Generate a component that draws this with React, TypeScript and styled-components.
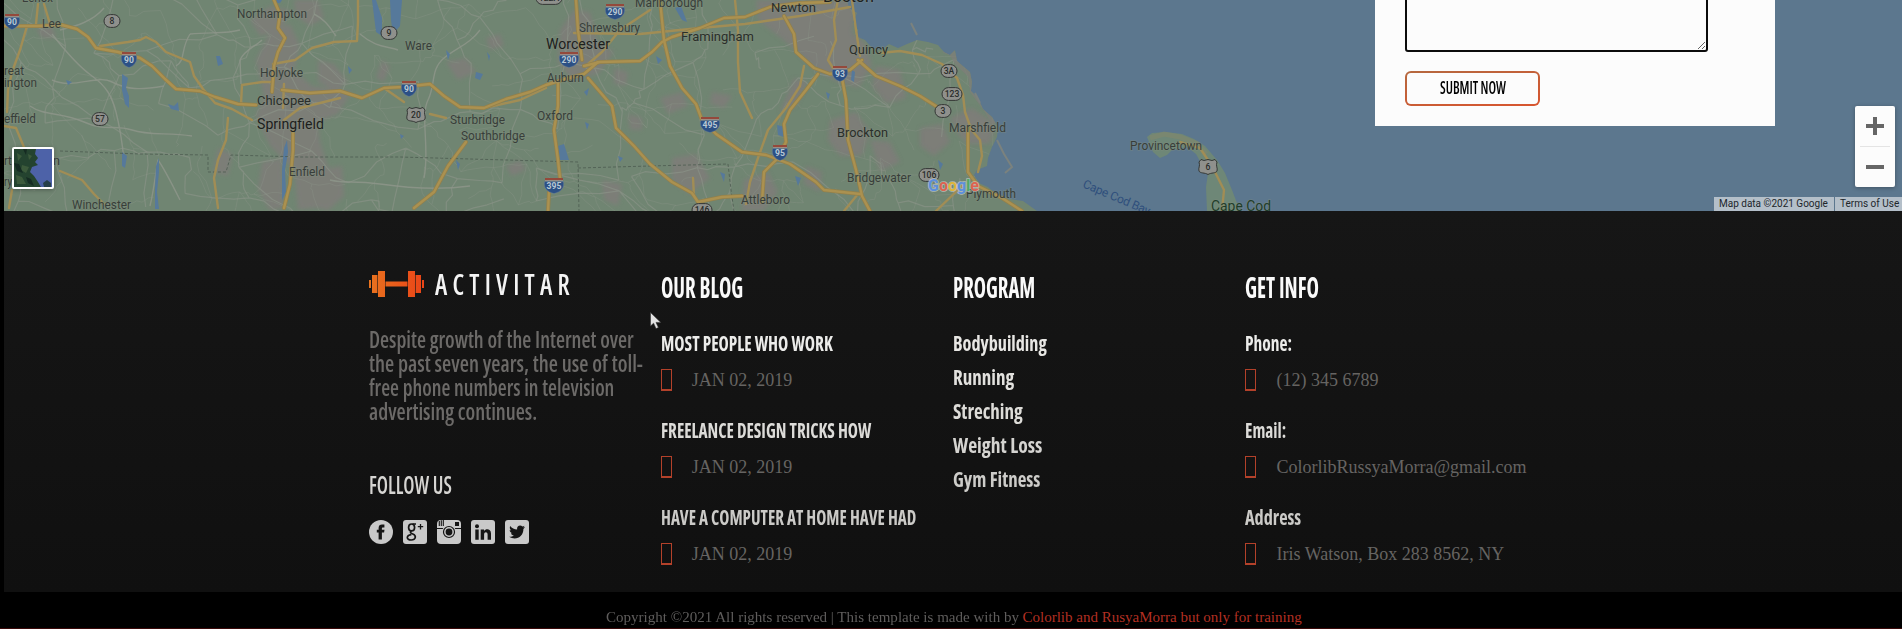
import React, { useLayoutEffect, useRef, useState } from "react";
import styled, { createGlobalStyle } from "styled-components";

const GlobalStyle = createGlobalStyle`
  * { box-sizing: border-box; }
  html, body { margin: 0; background: #000; overflow: hidden; }
  body { font-family: "Liberation Serif", serif; }
`;

/* ---------- text squeezed to the width of a condensed face ---------- */

const FitBox = styled.span`
  display: block;
  white-space: nowrap;
  & > span {
    display: inline-block;
    transform-origin: 0 50%;
  }
`;

function Fit({ width, children }: { width: number; children: string }) {
  const ref = useRef<HTMLSpanElement>(null);
  const [scale, setScale] = useState(1);
  useLayoutEffect(() => {
    if (ref.current) setScale(width / ref.current.offsetWidth);
  }, [width, children]);
  return (
    <FitBox style={{ width }}>
      <span ref={ref} style={{ transform: `scaleX(${scale})` }}>{children}</span>
    </FitBox>
  );
}

/* ---------- page ---------- */

const Page = styled.div`
  position: relative;
  width: 1902px;
  height: 629px;
  padding-left: 4px;
  background: #000;
  overflow: hidden;
`;

const MapSection = styled.section`
  position: relative;
  height: 211px;
  overflow: hidden;
  background: #5c778e;
`;

const MapArt = styled.svg`
  display: block;
  width: 1898px;
  height: 211px;
  font-family: Roboto, sans-serif;
`;

const ContactCard = styled.div`
  position: absolute;
  left: 1371px;
  top: 0;
  width: 400px;
  height: 126px;
  padding: 0 0 0 30px;
  background: #fcfcfc;
`;

const MessageBox = styled.textarea`
  display: block;
  width: 303px;
  height: 60px;
  margin: -8px 0 19px;
  border: 2px solid #0c0c0c;
  border-radius: 3px;
  background: #fcfcfc;
  resize: both;
  outline: none;
`;

const SubmitButton = styled.button`
  display: flex;
  align-items: center;
  justify-content: center;
  width: 135px;
  height: 35px;
  padding: 0 0 3px;
  border: 2px solid transparent;
  border-radius: 6px;
  background:
    linear-gradient(#fcfcfc, #fcfcfc) padding-box,
    linear-gradient(170deg, #b5683f, #d8552f) border-box;
  color: #000;
  font: 600 17px "Open Sans", sans-serif;
  font-stretch: 75%;
`;

const ZoomControl = styled.div`
  position: absolute;
  left: 1851px;
  top: 106px;
  width: 40px;
  height: 81px;
  display: flex;
  flex-direction: column;
  align-items: center;
  background: #fcfcfc;
  border-radius: 2px;
  box-shadow: 0 1px 4px rgba(0, 0, 0, 0.3);
`;

const ZoomButton = styled.button`
  flex: 1;
  width: 30px;
  padding: 0;
  border: 0;
  background: none;
  display: grid;
  place-items: center;
  & + & { border-top: 1px solid #e4e4e4; }
`;

const Thumb = styled.div`
  position: absolute;
  left: 8px;
  top: 147px;
  width: 42px;
  height: 42px;
  border: 2px solid #fff;
  border-radius: 2px;
  overflow: hidden;
  box-shadow: 0 1px 4px rgba(0, 0, 0, 0.3);
  svg { display: block; }
`;

const Attribution = styled.div`
  position: absolute;
  right: 0;
  bottom: 0;
  height: 14px;
  display: flex;
  gap: 1px;
  color: #20262b;
  font: 10px/14px Roboto, sans-serif;
`;

const AttributionCell = styled.div<{ $width: number }>`
  width: ${(p) => p.$width}px;
  padding-left: 5px;
  background: #b4bfc9;
`;

const Footer = styled.footer`
  height: 381px;
  padding: 56px 0 0 364.5px;
  display: grid;
  grid-template-columns: repeat(4, 292.33px);
  align-items: start;
  background: linear-gradient(#161616, #101010);
`;

const Logo = styled.div`
  display: flex;
  align-items: center;
  gap: 11px;
  height: 34px;
  color: #f4f4f4;
  font: 600 29px/34px "Open Sans", sans-serif;
  font-stretch: 75%;
  letter-spacing: 6px;
`;

const About = styled.div`
  margin-top: 26px;
  color: #6c6a68;
  font: 600 23.5px/24.1px "Open Sans", sans-serif;
  font-stretch: 75%;
`;

const Heading = styled.h3`
  margin: 2px 0 21px;
  color: #fafafa;
  font: 700 28.5px/36px "Open Sans", sans-serif;
  font-stretch: 75%;
`;

const FollowTitle = styled.h4`
  margin: 44px 0 17px;
  color: #d6d5d2;
  font: 600 24.5px/36px "Open Sans", sans-serif;
  font-stretch: 75%;
`;

const Socials = styled.div`
  display: flex;
  gap: 10px;
  svg { display: block; }
`;

const ItemTitle = styled.div<{ $tone: string }>`
  color: ${(p) => p.$tone};
  font: 700 21.5px/34px "Open Sans", sans-serif;
  font-stretch: 75%;
`;

const Meta = styled.div`
  display: flex;
  gap: 20px;
  margin: 9px 0 22px;
  color: #666462;
  font: 18px/23px "Liberation Serif", serif;
  height: 22px;
`;

const Glyph = styled.i`
  width: 11px;
  height: 22px;
  border: 1px solid #b3412a;
  border-bottom-width: 2px;
`;

const Copyright = styled.div`
  height: 36px;
  padding: 8px 0 0 601.5px;
  display: flex;
  gap: 4px;
  color: #5f5d5c;
  font: 15px/34px "Liberation Serif", serif;
`;

const CreditLink = styled.a`
  color: #b32f22;
`;

const BottomLine = styled.div`
  height: 1px;
  margin-left: -4px;
  background: #3a0909;
`;

const Pointer = styled.svg`
  position: absolute;
  left: 650px;
  top: 312px;
`;

/* ---------- map data ---------- */

const COAST =
  "M847 0 L849 8 L857 13 L853 22 L858 30 L855 36 L865 40 L872 48 L881 50 L889 44 L898 48 L907 44 L917 40 L928 42 L938 45 L944 52 L950 55 L955 50 L957 61 L964 67 L970 72 L972 82 L971 91 L978 98 L983 109 L992 117 L998 127 L997 137 L992 147 L988 158 L987 166 L977 170 L974 175 L979 183 L988 187 L997 195 L1010 199 L1023 201 L1030 206 L1037 211";

const CAPE =
  "M1147 137 L1152 133 L1166 132 L1182 134 L1194 139 L1205 146 L1217 160 L1225 173 L1232 190 L1240 211 L1207 211 L1206 187 L1208 173 L1201 163 L1196 154 L1187 147 L1172 150 L1167 155 L1160 158 L1153 152 Z";

const HIGHWAYS = [
  "M4 26 L22 26 L38 26 L62 25 L77 29 L88 37 L96 48 L118 52 L140 58 L152 66 L165 79 L176 89 L200 91 L215 97 L238 104 L256 105",
  "M278 28 L285 38 L278 52 L274 66 L272 92 M274 0 L280 14 L278 28",
  "M293 132 L293 150 L290 184 L284 208",
  "M282 90 L310 93 L340 91 L362 98 L384 88 L402 87 L430 84 L444 96 L460 107 L484 108 L506 99 L530 92 L546 85 L562 80 L584 74 L598 62",
  "M576 0 L578 30 L582 60",
  "M588 78 L612 106 L616 128 L634 146 L650 164 L672 182 L692 193 L698 202 L722 197 L742 196",
  "M584 66 L600 62 L640 61 L652 52 L662 42 L672 37 L700 28 L724 18 L745 17 L770 7 L800 3 L830 2",
  "M660 0 L664 40 L670 66 L682 88 L696 104 L702 120 L716 134 L742 152 L766 155 L790 164 L816 182 L824 190 L860 194",
  "M784 16 L794 34 L796 52 L814 68 L830 74 L850 70 L862 60",
  "M818 74 L806 90 L790 110 L784 124 L786 142 L776 160 L764 172 L762 202",
  "M842 78 L846 100 L848 140 L856 170 L862 196 L870 211",
  "M858 60 L876 76 L900 86 L920 96 L942 110 M968 128 L968 150 L968 172 L978 186 L1002 198 L1022 211",
  "M558 82 L558 106 L554 130 L558 160 L560 178",
  "M549 192 L548 211",
  "M466 142 L448 166 L434 192 L414 208",
];

const MAIN_ROADS = [
  "M100 46 L128 42 L140 40 L146 37 L156 42 L166 52 L190 62 L194 76 L203 89 L215 103 L232 109 L252 120",
  "M273 64 L295 60 L312 48 L334 42 L357 41 L358 22 L358 0",
  "M241 104 L242 85 L262 82 L272 82 M284 84 L283 108",
  "M228 118 L226 140 L218 160 L214 178 L218 208",
  "M588 64 L602 52 L620 30 L650 10",
  "M574 33 L640 34 L700 28 L745 24 L800 16 L850 7",
  "M735 0 L738 30 L738 62 L740 92 L752 118",
  "M838 76 L828 60 L836 40 L834 20 L838 0",
  "M804 66 L800 86 L786 108 L768 130 L758 158 L750 182 L746 204",
  "M852 0 L856 30 L860 56",
  "M880 53 L900 51 L922 55 L942 64 L957 78 L963 95 L965 112 L970 126",
  "M4 126 L16 128 L26 152 M60 171 L82 180 L94 194 L104 204",
  "M27 26 L20 50 L12 72 L8 90 L7 112 M12 190 L9 208",
  "M38 4 L36 24 M44 4 L50 24",
  "M1180 142 L1200 148 L1212 166 L1224 190 L1222 211",
  "M858 194 L844 211 M962 186 L936 211 M978 172 L982 156 L980 140 L970 128",
  "M384 88 L404 102 M430 114 L446 118 M484 108 L520 100 L546 88 M284 120 L300 108 L340 98",
  "M693 178 L694 196",
];

const URBAN = [
  "M256 60 l14 -28 l20 -8 l10 22 l-6 24 l18 16 l40 6 l-14 22 l-20 8 l2 20 l10 30 l-14 36 l-18 2 l-4 -40 l-24 -24 l-14 -30 l8 -20 z",
  "M250 20 l20 -14 l20 4 l-8 20 l-22 6 z M318 60 l16 4 l14 18 l-12 10 l-18 -10 z M294 0 l24 0 l6 18 l-14 8 l-14 -10 z",
  "M262 162 l20 -4 l2 50 l-14 3 l-12 -22 z M318 170 l24 -4 l2 30 l-16 15 l-18 -5 z",
  "M560 30 l14 -20 l16 2 l8 30 l16 10 l-16 22 l-26 6 l-14 -18 z",
  "M756 0 l92 0 l8 12 l-4 20 l14 12 l6 22 l-14 22 l-20 -6 l-20 -10 l-30 -28 l-30 -24 z",
  "M830 120 l26 -8 l14 20 l-8 24 l-22 0 l-12 -16 z M876 66 l24 4 l6 28 l-20 6 l-14 -18 z M794 78 l14 4 l-12 24 l-16 6 z",
  "M660 98 l22 -6 l6 14 l-20 8 z M672 158 l24 -4 l14 24 l-20 16 l-18 -14 z M712 92 l20 4 l-8 12 l-14 -4 z",
  "M744 180 l24 -8 l10 20 l-14 19 l-22 0 z M806 166 l16 6 l-2 20 l-16 -8 z M870 140 l20 2 l10 20 l-20 10 z",
  "M920 128 l22 -4 l8 18 l-16 14 l-14 -10 z M950 118 l22 -10 l24 16 l-6 20 l-22 0 l-10 -10 z",
  "M614 68 l14 4 l-2 14 l-12 -2 z M628 114 l14 4 l0 12 l-12 0 z M602 180 l20 4 l-4 22 l-14 -6 z",
  "M446 62 l20 -4 l10 14 l-18 8 z M486 38 l14 -4 l4 12 l-14 4 z M36 28 l16 -2 l4 12 l-14 0 z",
  "M506 166 l14 -6 l6 10 l-14 6 z M382 60 l8 6 l-6 16 l-8 -4 z M218 148 l14 6 l-4 22 l-14 -4 z",
];

const LAKES = [
  "M372 0 l4 0 l6 18 l0 18 l-6 -4 z M390 0 l12 0 l-2 26 l-7 8 l-2 -14 z",
  "M122 74 l6 4 l-2 10 l3 8 l0 12 l-4 -4 l-3 -14 z M168 104 l6 2 l4 -4 l1 9 l-8 -2 z",
  "M122 152 l5 4 l-2 12 l-3 -2 z M156 166 l3 -8 l0 14 l-2 20 l2 17 l-4 0 l0 -20 z",
  "M216 56 l4 0 l3 8 l-5 2 z M284 148 l3 -8 l1 12 l-3 18 l1 22 l-4 8 l0 -30 z",
  "M558 146 l6 -2 l5 16 l-9 0 z M777 125 l8 2 l-1 10 l-6 -2 z M675 8 l6 -2 l6 16 l-5 -2 z",
  "M476 72 l7 2 l-3 6 l-5 -2 z M487 52 l3 4 l-1 5 z M584 92 l5 -4 l-2 8 z M456 160 l4 4 l-2 6 z",
  "M446 50 l4 4 l-2 6 z M826 92 l4 2 l-2 6 z M852 70 l3 2 l-1 10 l-3 -2 z M938 160 l5 4 l-3 6 z",
  "M795 176 l6 2 l-3 8 z M720 172 l5 2 l-1 8 z M585 122 l4 2 l-2 6 z M618 156 l5 2 l-3 4 z M656 56 l6 4 l-4 4 z",
  "M66 80 l6 2 l-4 3 z M348 66 l4 4 l-3 4 z M400 134 l4 2 l-3 3 z M274 0 l8 0 l-2 3 l-5 0 z",
];

const COUNTRY_ROADS =
  "M52 34 C66 52 78 66 92 76 S112 96 116 112 S122 140 124 160 M190 34 C180 50 186 60 176 66 M190 34 C212 32 226 34 240 30 M52 80 C74 90 96 74 112 82 S140 90 164 86 M30 106 C44 116 62 112 84 122 S114 124 132 130 S168 132 192 136 M60 30 C76 26 92 22 104 8 M240 60 C244 50 256 46 262 40 M240 60 L241 84 M360 34 C376 48 388 46 398 50 M444 58 C430 70 436 84 428 100 S430 150 424 178 M444 58 C456 48 470 44 480 30 M336 36 C330 28 326 20 314 14 M150 206 C154 190 156 170 158 160 C164 168 172 184 180 200 M330 180 C346 184 352 180 380 184 S440 190 470 186";

function seeded(seed: number) {
  let s = seed;
  return () => {
    s = (s * 16807) % 2147483647;
    return s / 2147483647;
  };
}

/* local roads: a loose net of bent segments between jittered nodes */
function localRoads(stepX: number, stepY: number, keep: number, seed: number, bend: number) {
  const rnd = seeded(seed);
  const rows = Math.ceil(230 / stepY) + 1;
  const cols = Math.ceil(1040 / stepX) + 1;
  const pts = Array.from({ length: rows }, (_, r) =>
    Array.from({ length: cols }, (_, c) => [
      c * stepX + (rnd() - 0.5) * stepX * 0.9,
      r * stepY - 10 + (rnd() - 0.5) * stepY * 0.9,
    ])
  );
  const j = () => (rnd() - 0.5) * bend;
  let d = "";
  const join = (a: number[], b: number[]) => {
    const at = (t: number) => [a[0] + (b[0] - a[0]) * t + j(), a[1] + (b[1] - a[1]) * t + j()];
    const p = [at(0.25), at(0.5), at(0.75), b];
    d += `M${a[0].toFixed(1)} ${a[1].toFixed(1)}` + p.map((q) => `L${q[0].toFixed(1)} ${q[1].toFixed(1)}`).join("");
  };
  for (let r = 0; r < rows; r++)
    for (let c = 0; c < cols; c++) {
      if (c + 1 < cols && rnd() < keep) join(pts[r][c], pts[r][c + 1]);
      if (r + 1 < rows && rnd() < keep) join(pts[r][c], pts[r + 1][c]);
      if (c + 1 < cols && r + 1 < rows && rnd() < keep * 0.3) join(pts[r][c], pts[r + 1][c + 1]);
    }
  return d;
}

const ROADS_WIDE = localRoads(50, 44, 0.62, 71, 7);
const ROADS_FINE = localRoads(26, 23, 0.5, 913, 4);

type Label = [string, number, number, number, number, string?];
const LABELS: Label[] = [
  ["Lenox", 22, 2, 31, 12],
  ["Lee", 42, 28, 19, 12],
  ["Northampton", 237, 18, 70, 12],
  ["Ware", 405, 50, 27, 12],
  ["reat", 4, 75, 20, 12],
  ["ington", 4, 87, 33, 12],
  ["effield", 4, 123, 32, 12],
  ["Holyoke", 260, 77, 43, 12],
  ["Chicopee", 257, 105, 54, 13, "#2a2e2a"],
  ["Springfield", 257, 129, 67, 13.8, "#1d201d"],
  ["Sturbridge", 450, 124, 55, 12],
  ["Southbridge", 461, 140, 64, 12],
  ["rth", 4, 165, 14, 12],
  ["n", 53, 165, 7, 12],
  ["ry", 4, 186, 8, 12],
  ["Enfield", 289, 176, 36, 12],
  ["Winchester", 72, 209, 59, 12],
  ["Marlborough", 635, 7, 68, 12],
  ["Newton", 771, 12, 45, 13, "#2a2e2a"],
  ["Boston", 823, 2, 51, 16, "#1d201d"],
  ["Shrewsbury", 579, 32, 61, 12],
  ["Worcester", 546, 49, 64, 13.8, "#1d201d"],
  ["Framingham", 681, 41, 73, 13, "#2a2e2a"],
  ["Quincy", 849, 54, 39, 13, "#2a2e2a"],
  ["Auburn", 547, 82, 37, 12],
  ["Oxford", 537, 120, 36, 12],
  ["Brockton", 837, 137, 51, 13, "#2a2e2a"],
  ["Bridgewater", 847, 182, 64, 12],
  ["Attleboro", 741, 204, 49, 12],
  ["Marshfield", 949, 132, 57, 12],
  ["Plymouth", 966, 198, 50, 12],
  ["Provincetown", 1130, 150, 72, 12],
  ["Cape Cod", 1211, 211, 60, 13.8, "#1f3d2a"],
];

const SHIELDS: [string, number, number][] = [
  ["90", 12, 22], ["90", 129, 60], ["90", 409, 89], ["290", 615, 12], ["290", 569, 60],
  ["495", 710, 125], ["93", 840, 74], ["95", 780, 153], ["395", 554, 186],
];

const ROUTES: [string, number, number][] = [
  ["8", 112, 21], ["9", 389, 33], ["57", 100, 119], ["122A", 549, -2], ["3A", 949, 71],
  ["123", 952, 94], ["3", 943, 111], ["106", 929, 175], ["146", 702, 210],
];

const US_ROUTES: [string, number, number][] = [["20", 416, 115], ["6", 1208, 167]];

function MapDrawing() {
  return (
    <MapArt viewBox="4 0 1898 211">
      <defs>
        <clipPath id="land"><path d={`${COAST} L4 211 L4 0 Z`} /></clipPath>
        <filter id="soft" x="-10%" y="-10%" width="120%" height="120%"><feGaussianBlur stdDeviation="2.2" /></filter>
      </defs>
      <path d={`${COAST} L4 211 L4 0 Z`} fill="#708572" />
      <g clipPath="url(#land)">
        <g fill="#7f7d79" filter="url(#soft)" opacity="0.85">
          {URBAN.map((d) => <path key={d} d={d} />)}
        </g>
        <g fill="none" stroke="#8d9589" strokeLinejoin="round">
          <path d={ROADS_FINE} strokeWidth="0.8" opacity="0.42" />
          <path d={ROADS_WIDE} strokeWidth="1.2" opacity="0.62" />
          <path d={COUNTRY_ROADS} strokeWidth="1.4" opacity="0.85" />
        </g>
        <path d="M944 50 l8 3 l6 10 l13 12 l2 16 l12 16 l10 16" fill="none" stroke="#7f7e79" strokeWidth="6" opacity="0.7" />
      </g>
      <path d="M997 140 L1004 154 L1012 167 L1005 173 M975 93 L980 103 M911 23 L917 35" fill="none" stroke="#7b827e" strokeWidth="2" />
      <path d={LAKES.join(" ")} fill="#56799b" />
      <path d={CAPE} fill="#6e8777" />
      <path d="M1150 138 L1164 134 L1180 137 L1198 144 L1206 154" fill="none" stroke="#82876c" strokeWidth="5" opacity="0.6" />
      <path
        d="M60 151 L140 154 L208 155 L208 172 L226 172 L231 155 L300 157 L400 157 L470 159 L578 162 L579 211 M578 168 L650 166 L728 164 L731 190 L734 211"
        fill="none" stroke="#4c5b50" strokeWidth="1" strokeDasharray="3 2" opacity="0.8"
      />
      <g fill="none" strokeLinejoin="round" strokeLinecap="round">
        <g stroke="#a18d55" strokeWidth="2.4">{MAIN_ROADS.map((d) => <path key={d} d={d} />)}</g>
        <g stroke="#93804b" strokeWidth="4">{HIGHWAYS.map((d) => <path key={d} d={d} />)}</g>
        <g stroke="#ab9150" strokeWidth="2.4">{HIGHWAYS.map((d) => <path key={d} d={d} />)}</g>
      </g>
      {LABELS.map(([t, x, y, w, size, fill]) => (
        <text
          key={t} x={x} y={y} fontSize={size} textLength={w} lengthAdjust="spacingAndGlyphs"
          fill={fill ?? "#383e3a"} stroke="#84907f" strokeWidth="1.6" strokeOpacity="0.4" paintOrder="stroke"
        >{t}</text>
      ))}
      <text x="1082" y="187" fontSize="12" fill="#2f4f7c" transform="rotate(23 1082 187)" textLength="72">Cape Cod Bay</text>
      {SHIELDS.map(([t, x, y]) => {
        const w = t.length > 2 ? 10 : 8;
        return (
          <g key={t + x} transform={`translate(${x} ${y})`}>
            <path d={`M${-w + 1} -8 L${w - 1} -8 L${w - 1} -5.5 L${-w + 1} -5.5 Z`} fill="#94493b" />
            <path d={`M${-w + 1} -5.2 H${w - 1}`} stroke="#b0b0ac" strokeWidth="0.8" />
            <path d={`M${-w + 0.6} -4.6 H${w - 0.6} C${w + 0.8} 2 ${w - 3} 5.6 0 7.6 C${-w + 3} 5.6 ${-w - 0.8} 2 ${-w + 0.6} -4.6 Z`} fill="#2c5085" stroke="#6f879f" strokeWidth="0.4" />
            <text textAnchor="middle" y="3.3" fontSize="8.6" fontWeight="700" fill="#b9c8d4">{t}</text>
          </g>
        );
      })}
      {ROUTES.map(([t, x, y]) => {
        const w = t.length > 3 ? 13 : t.length > 2 ? 10 : 8;
        return (
          <g key={t + x} transform={`translate(${x} ${y})`}>
            <rect x={-w} y="-6.4" width={w * 2} height="12.8" rx="6.4" fill="#8f908c" stroke="#343735" strokeWidth="1" />
            <text textAnchor="middle" y="3.1" fontSize="8.6" fontWeight="500" fill="#292c2a">{t}</text>
          </g>
        );
      })}
      {US_ROUTES.map(([t, x, y]) => (
        <g key={t} transform={`translate(${x} ${y})`}>
          <path d="M-7 -7.5 L-4 -6.5 L0 -7.5 L4 -6.5 L7 -7.5 L9 -5 C7.5 -1 10 1 9 4 C8 6.5 3 5.5 0 7.5 C-3 5.5 -8 6.5 -9 4 C-10 1 -7.5 -1 -9 -5 Z" fill="#8f908c" stroke="#343735" strokeWidth="1" />
          <text textAnchor="middle" y="3.4" fontSize="8.6" fontWeight="500" fill="#292c2a">{t}</text>
        </g>
      ))}
      <text x="928" y="190.5" fontSize="16" fontWeight="700" stroke="#d9dcda" strokeWidth="1.6" strokeOpacity="0.6" paintOrder="stroke" textLength="51" lengthAdjust="spacingAndGlyphs">
        <tspan fill="#5c8fdc">G</tspan><tspan fill="#dd6350">o</tspan><tspan fill="#dfb53c">o</tspan><tspan fill="#5c8fdc">g</tspan><tspan fill="#50a865">l</tspan><tspan fill="#dd6350">e</tspan>
      </text>
    </MapArt>
  );
}

function Satellite() {
  return (
    <svg width="38" height="38" viewBox="0 0 38 38">
      <rect width="38" height="38" fill="#4d62a8" />
      <path d="M0 0 H22 L21 5 L24 9 L21 13 L24 16 L18 18 L16 23 L20 27 L24 33 L27 38 H0 Z" fill="#24432f" />
      <path d="M3 4 l5 3 l-4 5 z M8 16 l7 2 l-3 6 l-5 -3 z M2 26 l6 2 l4 7 l-9 0 z M14 5 l4 2 l-3 4 z" fill="#3c5a3b" />
      <path d="M0 14 l5 1 l4 9 l-6 -2 z M12 28 l5 2 l3 7 l-6 -3 z M9 0 l4 0 l-1 6 z" fill="#152b22" />
      <path d="M29 34 l4 -3 l4 3 l0 4 l-7 0 z" fill="#27404a" />
    </svg>
  );
}

/* ---------- footer drawings ---------- */

function Dumbbell() {
  return (
    <svg width="55" height="26" viewBox="0 0 55 26">
      <defs>
        <linearGradient id="bar" gradientUnits="userSpaceOnUse" x1="0" y1="0" x2="55" y2="0">
          <stop offset="0" stopColor="#e8731f" /><stop offset="1" stopColor="#ea4417" />
        </linearGradient>
      </defs>
      <g fill="url(#bar)">
        <rect x="0" y="9" width="2" height="8" /><rect x="3" y="4" width="5.4" height="18" />
        <rect x="9" y="0" width="7" height="26" /><rect x="16.5" y="10.5" width="22" height="5" />
        <rect x="39" y="0" width="7" height="26" /><rect x="46.6" y="4" width="5.4" height="18" />
        <rect x="53" y="9" width="2" height="8" />
      </g>
    </svg>
  );
}

function SocialIcons() {
  const light = "#c9c9c9";
  const dark = "#151515";
  return (
    <Socials>
      <svg width="24" height="24" viewBox="0 0 24 24">
        <circle cx="12" cy="12" r="12" fill={light} />
        <path d="M9.6 19.5 V12.6 H7.8 V9.7 H9.6 V8 C9.6 5.7 10.9 4.6 13 4.6 H15.4 V7.5 H14 C13.2 7.5 12.9 7.8 12.9 8.5 V9.7 H15.5 L15.1 12.6 H12.9 V19.5 Z" fill={dark} />
      </svg>
      <svg width="24" height="24" viewBox="0 0 24 24">
        <rect width="24" height="24" rx="3" fill={light} />
        <g fill="none" stroke={dark} strokeWidth="1.7">
          <ellipse cx="8.6" cy="7.4" rx="3" ry="3.4" />
          <path d="M8.5 11 C6.3 12.3 8 13.3 9.8 14 C13.8 15.6 12.8 20 8.2 20 C3 20 3 15.4 8.3 14.6 M9.5 4 H13" />
          <path d="M17.5 4 V9.4 M14.8 6.7 H20.2" strokeWidth="1.3" />
        </g>
      </svg>
      <svg width="24" height="24" viewBox="0 0 24 24">
        <rect width="24" height="24" rx="4" fill={light} />
        <path d="M0 8.5 H24" stroke={dark} strokeWidth="1" />
        <path d="M2.3 1 V6 M4.3 .3 V6 M6.3 0 V6" stroke={dark} strokeWidth="1.1" />
        <rect x="18" y="2" width="4" height="4" fill={dark} />
        <circle cx="12" cy="12" r="7" fill={light} />
        <circle cx="12" cy="12" r="5.5" fill="none" stroke={dark} strokeWidth="1.2" />
        <circle cx="12" cy="12" r="3.4" fill={dark} />
      </svg>
      <svg width="24" height="24" viewBox="0 0 24 24">
        <rect width="24" height="24" rx="3" fill={light} />
        <circle cx="6" cy="6.3" r="2" fill={dark} />
        <path d="M4.3 9.5 H7.7 V19.7 H4.3 Z M9.7 9.5 H13 V11 C15 8.2 20 8.9 20 13.6 V19.7 H16.6 V14.4 C16.6 11.5 13.1 11.5 13.1 14.4 V19.7 H9.7 Z" fill={dark} />
      </svg>
      <svg width="24" height="24" viewBox="0 0 24 24">
        <rect width="24" height="24" rx="3" fill={light} />
        <path d="M20 7 C19.4 7.3 18.8 7.5 18.1 7.6 C18.8 7.1 19.3 6.5 19.5 5.7 C18.9 6.1 18.2 6.4 17.4 6.5 C15.4 4.4 11.5 5.7 12.1 9.5 C9.3 9.4 6.9 8 5.2 6 C4.4 7.4 4.8 9.4 6.2 10.3 C5.7 10.3 5.2 10.1 4.7 9.9 C4.7 11.5 5.8 12.8 7.4 13.2 C6.9 13.3 6.4 13.3 5.9 13.2 C6.3 14.5 7.5 15.4 8.9 15.5 C7.6 16.5 5.8 17 4.2 16.8 C11 21 18.6 16.5 18.4 8.9 C19 8.4 19.6 7.8 20 7 Z" fill={dark} />
      </svg>
    </Socials>
  );
}

/* ---------- content ---------- */

type Entry = { title: string; titleW: number; note: string; noteW: number; tone: string };

const BLOG: Entry[] = [
  { title: "MOST PEOPLE WHO WORK", titleW: 172, note: "JAN 02, 2019", noteW: 101, tone: "#ececea" },
  { title: "FREELANCE DESIGN TRICKS HOW", titleW: 210, note: "JAN 02, 2019", noteW: 101, tone: "#dcdbd8" },
  { title: "HAVE A COMPUTER AT HOME HAVE HAD", titleW: 255, note: "JAN 02, 2019", noteW: 101, tone: "#cbcac7" },
];

const INFO: Entry[] = [
  { title: "Phone:", titleW: 47, note: "(12) 345 6789", noteW: 102, tone: "#ececea" },
  { title: "Email:", titleW: 41, note: "ColorlibRussyaMorra@gmail.com", noteW: 250, tone: "#dcdbd8" },
  { title: "Address", titleW: 56, note: "Iris Watson, Box 283 8562, NY", noteW: 228, tone: "#cbcac7" },
];

const PROGRAMS: [string, number, string][] = [
  ["Bodybuilding", 94, "#e8e7e4"],
  ["Running", 61, "#e2e1de"],
  ["Streching", 70, "#dddcd8"],
  ["Weight Loss", 89, "#d5d4d1"],
  ["Gym Fitness", 87, "#cdccc9"],
];

const ABOUT: [string, number][] = [
  ["Despite growth of the Internet over", 265],
  ["the past seven years, the use of toll-", 274],
  ["free phone numbers in television", 245],
  ["advertising continues.", 168],
];

function Entries({ items }: { items: Entry[] }) {
  return (
    <>
      {items.map((e) => (
        <div key={e.title}>
          <ItemTitle $tone={e.tone}><Fit width={e.titleW}>{e.title}</Fit></ItemTitle>
          <Meta><Glyph /><Fit width={e.noteW}>{e.note}</Fit></Meta>
        </div>
      ))}
    </>
  );
}

export default function App() {
  return (
    <Page>
      <GlobalStyle />
      <MapSection>
        <MapDrawing />
        <Thumb><Satellite /></Thumb>
        <ContactCard>
          <MessageBox />
          <SubmitButton><Fit width={66}>SUBMIT NOW</Fit></SubmitButton>
        </ContactCard>
        <ZoomControl>
          <ZoomButton>
            <svg width="18" height="18"><path d="M9 0 V18 M0 9 H18" stroke="#666" strokeWidth="4" /></svg>
          </ZoomButton>
          <ZoomButton>
            <svg width="18" height="4"><path d="M0 2 H18" stroke="#666" strokeWidth="4" /></svg>
          </ZoomButton>
        </ZoomControl>
        <Attribution>
          <AttributionCell $width={120}><Fit width={109}>Map data ©2021 Google</Fit></AttributionCell>
          <AttributionCell $width={67}><Fit width={59}>Terms of Use</Fit></AttributionCell>
        </Attribution>
      </MapSection>
      <Footer>
        <div>
          <Logo><Dumbbell /><Fit width={140}>ACTIVITAR</Fit></Logo>
          <About>{ABOUT.map(([t, w]) => <Fit key={t} width={w}>{t}</Fit>)}</About>
          <FollowTitle><Fit width={83}>FOLLOW US</Fit></FollowTitle>
          <SocialIcons />
        </div>
        <div>
          <Heading><Fit width={82}>OUR BLOG</Fit></Heading>
          <Entries items={BLOG} />
        </div>
        <div>
          <Heading><Fit width={82}>PROGRAM</Fit></Heading>
          {PROGRAMS.map(([t, w, tone]) => <ItemTitle key={t} $tone={tone}><Fit width={w}>{t}</Fit></ItemTitle>)}
        </div>
        <div>
          <Heading><Fit width={74}>GET INFO</Fit></Heading>
          <Entries items={INFO} />
        </div>
      </Footer>
      <Copyright>
        <Fit width={413}>Copyright ©2021 All rights reserved | This template is made with by</Fit>
        <CreditLink><Fit width={279}>Colorlib and RusyaMorra but only for training</Fit></CreditLink>
      </Copyright>
      <BottomLine />
      <Pointer width="12" height="18" viewBox="0 0 12 18">
        <path d="M.5 .5 V14 L3.6 11.2 L6 16.6 L8.4 15.5 L6 10.4 H10.8 Z" fill="#e2e2e2" stroke="#333" strokeWidth="0.6" />
      </Pointer>
    </Page>
  );
}
